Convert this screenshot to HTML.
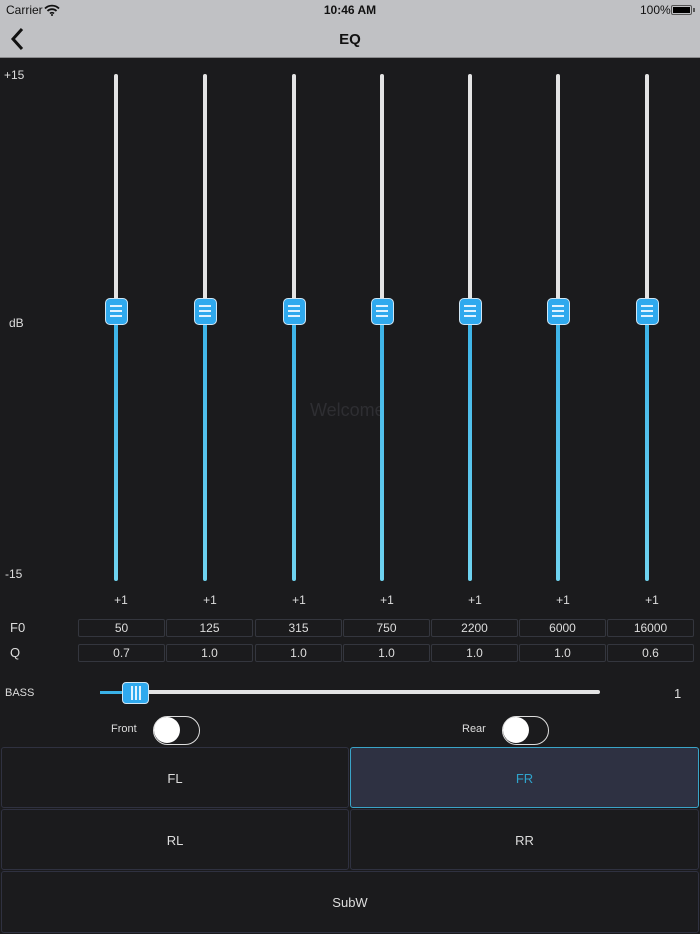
<!DOCTYPE html><html><head><style>
*{margin:0;padding:0;box-sizing:border-box}
body{width:700px;height:934px;background:#1b1b1d;font-family:"Liberation Sans",sans-serif;position:relative;overflow:hidden;color:#ddd}
.a{position:absolute}
.hdr{left:0;top:0;width:700px;height:58px;background:#c0c1c4;border-bottom:1px solid #8a8a8c}
.tr{width:4px;border-radius:2px}
.th{width:23px;height:27px;background:#2fa9ee;border:1.5px solid #cfe6f5;border-radius:5px}
.th i{position:absolute;left:4px;width:12px;height:2px;background:#dff2ff}
.box{height:18px;border:1px solid #34363e;border-radius:2px;font-size:12px;text-align:center;line-height:16px;color:#ddd}
.btn{border:1px solid #2f3140;border-radius:3px;font-size:13px;text-align:center;color:#ddd}
.tg{width:47px;height:29px;border:1.5px solid #ddd;border-radius:15px}
.tg b{position:absolute;left:0;top:0;width:26px;height:26px;border-radius:13px;background:#fff}
</style></head><body>
<div class="a hdr"></div>
<div class="a" style="left:6px;top:3px;font-size:12px;color:#111">Carrier</div>
<svg class="a" style="left:44px;top:4px" width="16" height="12" viewBox="0 0 16 12"><path d="M1 4.5a10 10 0 0 1 14 0M3.5 7a6.5 6.5 0 0 1 9 0M6 9.5a3 3 0 0 1 4 0" stroke="#111" stroke-width="1.8" fill="none"/><circle cx="8" cy="11" r="1" fill="#111"/></svg>
<div class="a" style="left:0;width:700px;top:3px;text-align:center;font-size:12px;color:#111;font-weight:bold">10:46 AM</div>
<div class="a" style="left:640px;top:3px;font-size:12px;color:#111">100%</div>
<div class="a" style="left:671px;top:5px;width:21px;height:10px;border:1px solid #555;border-radius:2px;padding:1px"><div style="width:100%;height:100%;background:#000"></div></div>
<div class="a" style="left:693px;top:8px;width:2px;height:4px;background:#555"></div>
<svg class="a" style="left:9px;top:27px" width="16" height="24" viewBox="0 0 16 24"><path d="M13 2L4 12l9 10" stroke="#111" stroke-width="3" fill="none"/></svg>
<div class="a" style="left:0;width:700px;top:31px;text-align:center;font-size:15px;font-weight:bold;color:#111">EQ</div>

<div class="a" style="left:4px;top:68px;font-size:12px">+15</div>
<div class="a" style="left:9px;top:316px;font-size:12px">dB</div>
<div class="a" style="left:5px;top:567px;font-size:12px">-15</div>
<div class="a" style="left:310px;top:400px;font-size:18px;color:#2e2e32">Welcome</div>

<div id="s"></div>
<script>
var xs=[116,205,294,382,470,558,647],f=[50,125,315,750,2200,6000,16000],q=['0.7','1.0','1.0','1.0','1.0','1.0','0.6'],bx=[78,166,255,343,431,519,607],h='';
xs.forEach(function(x,i){
h+='<div class="a tr" style="left:'+(x-2)+'px;top:74px;height:237px;background:#e4e4e4"></div>';
h+='<div class="a tr" style="left:'+(x-2)+'px;top:311px;height:270px;background:linear-gradient(#3ab2e8,#6fd3f0)"></div>';
h+='<div class="a th" style="left:'+(x-11)+'px;top:298px"><i style="top:6px"></i><i style="top:11px"></i><i style="top:16px"></i></div>';
h+='<div class="a" style="left:'+(x-15)+'px;width:40px;text-align:center;top:593px;font-size:12px">+1</div>';
h+='<div class="a box" style="left:'+bx[i]+'px;width:87px;top:619px">'+f[i]+'</div>';
h+='<div class="a box" style="left:'+bx[i]+'px;width:87px;top:644px">'+q[i]+'</div>';
});
document.getElementById('s').innerHTML=h;
</script>
<div class="a" style="left:10px;top:620px;font-size:13px">F0</div>
<div class="a" style="left:10px;top:645px;font-size:13px">Q</div>
<div class="a" style="left:5px;top:687px;font-size:11px">BASS</div>
<div class="a" style="left:100px;top:691px;width:30px;height:3px;background:#3ab2e8"></div>
<div class="a" style="left:130px;top:690px;width:470px;height:4px;background:#e4e4e4;border-radius:2px"></div>
<div class="a" style="left:122px;top:682px;width:27px;height:22px;background:#2fa9ee;border:1.5px solid #cfe6f5;border-radius:4px"></div>
<div class="a" style="left:131px;top:686px;width:1.5px;height:14px;background:#dff2ff"></div>
<div class="a" style="left:135px;top:686px;width:1.5px;height:14px;background:#dff2ff"></div>
<div class="a" style="left:139px;top:686px;width:1.5px;height:14px;background:#dff2ff"></div>
<div class="a" style="left:674px;top:686px;font-size:13px">1</div>

<div class="a" style="left:111px;top:723px;font-size:11px">Front</div>
<div class="a tg" style="left:153px;top:716px"><b></b></div>
<div class="a" style="left:462px;top:723px;font-size:11px">Rear</div>
<div class="a tg" style="left:502px;top:716px"><b></b></div>

<div class="a btn" style="left:1px;top:747px;width:348px;height:61px;line-height:61px">FL</div>
<div class="a btn" style="left:350px;top:747px;width:349px;height:61px;line-height:61px;background:#2e3142;border-color:#3aa4c8;color:#2fa3cc">FR</div>
<div class="a btn" style="left:1px;top:809px;width:348px;height:61px;line-height:61px">RL</div>
<div class="a btn" style="left:350px;top:809px;width:349px;height:61px;line-height:61px">RR</div>
<div class="a btn" style="left:1px;top:871px;width:698px;height:62px;line-height:62px">SubW</div>
</body></html>
